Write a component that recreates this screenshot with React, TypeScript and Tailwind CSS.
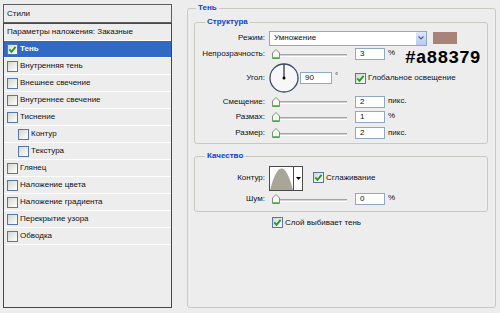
import type { ReactNode } from 'react';

const styleItems = [
  { label: 'Тень', checked: true, selected: true },
  { label: 'Внутренняя тень' },
  { label: 'Внешнее свечение' },
  { label: 'Внутреннее свечение' },
  { label: 'Тиснение' },
  { label: 'Контур', sub: true },
  { label: 'Текстура', sub: true },
  { label: 'Глянец' },
  { label: 'Наложение цвета' },
  { label: 'Наложение градиента' },
  { label: 'Перекрытие узора' },
  { label: 'Обводка' },
];

function CheckBox({ checked = false }: { checked?: boolean }) {
  return (
    <span className="inline-flex h-[11px] w-[11px] shrink-0 items-center justify-center border border-[#5577a8] bg-gradient-to-br from-[#d6d6d0] to-white">
      {checked && (
        <svg width="9" height="9" viewBox="0 0 9 9">
          <path d="M1.3 4.4 L3.5 6.8 L7.6 1.8" fill="none" stroke="#1f9e1f" strokeWidth="1.9" />
        </svg>
      )}
    </span>
  );
}

function Slider() {
  return (
    <div className="flex w-[78px] items-center pl-[3px]">
      <svg width="8" height="10" viewBox="0 0 8 10" className="shrink-0">
        <path d="M0.5 4 L4 0.5 L7.5 4 V9.5 H0.5 Z" fill="#f6f6f2" stroke="#7d927d" />
        <path d="M1 9 H7" stroke="#2cb02c" strokeWidth="1.4" />
      </svg>
      <div className="mt-[2px] h-[3px] flex-1 border-t border-b border-t-[#a3a3a3] border-b-white bg-[#d4d4d4]" />
    </div>
  );
}

function NumBox({ value, w = 30 }: { value: string; w?: number }) {
  return (
    <div
      className={`flex h-[12px] items-center border border-[#8fa8c6] bg-white pl-[4px] ${w === 32 ? 'w-[32px]' : 'w-[30px]'}`}
    >
      {value}
    </div>
  );
}

function Row({ label, h, children }: { label: string; h: string; children: ReactNode }) {
  return (
    <div className={`flex items-center ${h}`}>
      <span className="w-[70px] text-right">{label}</span>
      <div className="ml-[4px] flex h-full items-center">{children}</div>
    </div>
  );
}

function Group({ title, className, children }: { title: string; className: string; children: ReactNode }) {
  return (
    <fieldset className={`rounded-[3px] border border-[#c9c9c0] ${className}`}>
      <legend className="ml-[10px] px-[2px] text-[8px] font-bold leading-[12px] text-[#0a3fd8]">{title}</legend>
      {children}
    </fieldset>
  );
}

export default function App() {
  return (
    <div className="flex h-[313px] w-[500px] items-start bg-[#ededed] font-['Liberation_Sans',Arial,sans-serif] text-[8px] leading-[10px] text-[#111]">
      {/* styles list */}
      <div className="ml-[3px] mt-[4px] flex h-[304px] w-[169px] flex-col">
        <div className="flex h-[19px] items-center border border-[#5f5f5f] px-[3px]">Стили</div>
        <div className="flex-1 border border-[#474747]">
          <div className="flex h-[17px] items-center border-b border-white px-[3px]">
            Параметры наложения: Заказные
          </div>
          {styleItems.map((it) => (
            <div
              key={it.label}
              className={`flex h-[17px] items-center gap-[2px] border-b border-white px-[3px] ${
                it.selected ? 'bg-[#316ac5] font-bold text-white' : ''
              } ${it.sub ? 'pl-[14px]' : ''}`}
            >
              <CheckBox checked={it.checked} />
              <span>{it.label}</span>
            </div>
          ))}
        </div>
      </div>

      {/* shadow settings */}
      <fieldset className="ml-[15px] mt-[2px] h-[306px] w-[309px] rounded-[3px] border border-[#c9c9c0] pl-[6px] pr-[7px]">
        <legend className="ml-[2px] px-[2px] text-[8px] font-bold leading-[12px] text-[#0a3fd8]">Тень</legend>

        <Group title="Структура" className="mt-[2px] h-[128px]">
          <div className="pt-[2px]">
            <Row label="Режим:" h="h-[16px]">
              <div className="flex h-[15px] w-[158px] border border-[#8fa8c6] bg-white">
                <span className="flex flex-1 items-center pl-[4px]">Умножение</span>
                <span className="flex w-[10px] items-center justify-center bg-gradient-to-b from-[#dfe8fd] to-[#b6c9f2]">
                  <svg width="6" height="4" viewBox="0 0 6 4">
                    <path d="M0.5 0.5 L3 3 L5.5 0.5" fill="none" stroke="#4d6185" strokeWidth="1.2" />
                  </svg>
                </span>
              </div>
              <div className="ml-[6px] h-[12px] w-[24px] bg-[#a88379]" />
            </Row>
            <Row label="Непрозрачность:" h="h-[16px]">
              <Slider />
              <div className="ml-[8px]">
                <NumBox value="3" />
              </div>
              <span className="mb-[3px] w-[20px] pl-[3px]">%</span>
              <span className="mt-[3px] self-start font-['Liberation_Mono','Courier_New',monospace] text-[18px] font-bold leading-[18px] text-black">
                #a88379
              </span>
            </Row>
            <Row label="Угол:" h="h-[32px]">
              <svg width="30" height="30" viewBox="0 0 30 30">
                <circle cx="15" cy="15" r="14" fill="#f7f7f7" stroke="#3c4a6e" strokeWidth="1.3" />
                <line x1="15" y1="15" x2="15" y2="1.5" stroke="#000" strokeWidth="1" />
                <circle cx="15" cy="15" r="1.5" fill="#000" />
              </svg>
              <div className="ml-[1px]">
                <NumBox value="90" w={32} />
              </div>
              <span className="mb-[4px] w-[23px] pl-[3px]">°</span>
              <CheckBox checked />
              <span className="ml-[2px]">Глобальное освещение</span>
            </Row>
            <Row label="Смещение:" h="h-[15px]">
              <Slider />
              <div className="ml-[8px]">
                <NumBox value="2" />
              </div>
              <span className="mb-[1px] pl-[3px]">пикс.</span>
            </Row>
            <Row label="Размах:" h="h-[16px]">
              <Slider />
              <div className="ml-[8px]">
                <NumBox value="1" />
              </div>
              <span className="mb-[3px] pl-[3px]">%</span>
            </Row>
            <Row label="Размер:" h="h-[16px]">
              <Slider />
              <div className="ml-[8px]">
                <NumBox value="2" />
              </div>
              <span className="mb-[1px] pl-[3px]">пикс.</span>
            </Row>
          </div>
        </Group>

        <Group title="Качество" className="mt-[6px] h-[62px]">
          <div className="pt-[3px]">
            <Row label="Контур:" h="h-[26px]">
              <div className="flex h-[25px]">
                <div className="h-[25px] w-[25px] border border-[#4a4a4a] bg-white">
                  <svg width="23" height="23" viewBox="0 0 23 23">
                    <path d="M0 23 Q11.5 -20 23 23 Z" fill="#a9a597" />
                  </svg>
                </div>
                <div className="flex w-[9px] items-center justify-center border border-l-0 border-[#4a4a4a] bg-white">
                  <svg width="5" height="3" viewBox="0 0 5 3">
                    <path d="M0 0 H5 L2.5 3 Z" fill="#000" />
                  </svg>
                </div>
              </div>
              <span className="ml-[10px]">
                <CheckBox checked />
              </span>
              <span className="ml-[2px]">Сглаживание</span>
            </Row>
            <Row label="Шум:" h="h-[16px]">
              <Slider />
              <div className="ml-[8px]">
                <NumBox value="0" />
              </div>
              <span className="mb-[3px] pl-[3px]">%</span>
            </Row>
          </div>
        </Group>

        <div className="ml-[78px] mt-[5px] flex h-[11px] items-center gap-[2px]">
          <CheckBox checked />
          <span>Слой выбивает тень</span>
        </div>
      </fieldset>
    </div>
  );
}
